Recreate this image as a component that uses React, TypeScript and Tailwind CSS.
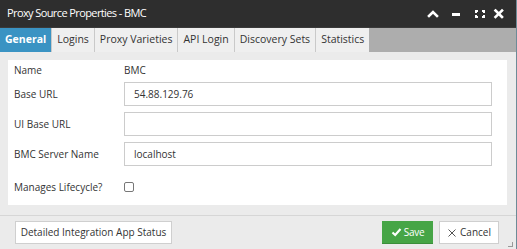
import React from "react";

const font = { fontFamily: '"Open Sans", "Liberation Sans", sans-serif' };

function Tab({ label, active }: { label: string; active?: boolean }) {
  return (
    <div
      className={
        active
          ? "h-full flex items-center px-[5px] bg-[#3a93c3] text-white font-bold text-[10.5px]"
          : "h-full flex items-center px-[5px] bg-[#efefef] text-[#333] text-[10.5px] border-l border-[#c9c9c9]"
      }
    >
      {label}
    </div>
  );
}

function Row({ label, value }: { label: string; value?: string }) {
  return (
    <div className="flex items-center h-[24px]">
      <div className="w-[110px] text-[10px] text-[#333]">{label}</div>
      <div className="flex-1 h-[24px] border border-[#cccccc] bg-white flex items-center px-[9px] text-[10px] text-[#333]">
        {value}
      </div>
    </div>
  );
}

export default function App() {
  return (
    <div className="w-[517px] h-[249px] bg-[#6d8b97] overflow-hidden" style={font}>
      <div className="w-[516px] h-[249px] flex flex-col bg-[#ebebeb]">
        {/* title bar */}
        <div className="h-[27px] bg-[#2e2e2e] flex items-center pl-[7px] pr-[10px] text-white">
          <div className="text-[11px] tracking-[-0.6px] flex-1">Proxy Source Properties - BMC</div>
          <div className="flex items-center">
            <svg width="24" height="14" viewBox="0 0 24 14">
              <path d="M7 9 L11 5 L15 9" stroke="white" strokeWidth="2.6" fill="none" strokeLinecap="square" />
            </svg>
            <svg width="22" height="14" viewBox="0 0 22 14">
              <rect x="6" y="6" width="8" height="3" fill="white" />
            </svg>
            <svg width="24" height="14" viewBox="0 0 24 14">
              <path d="M7 3h3v2H9v1H7zM17 3h-3v2h1v1h2zM7 11h3V9H9V8H7zM17 11h-3V9h1V8h2z" fill="white" />
            </svg>
            <svg width="14" height="14" viewBox="0 0 14 14">
              <path d="M3.5 3.5 L10 10 M10 3.5 L3.5 10" stroke="white" strokeWidth="2.6" strokeLinecap="square" />
            </svg>
          </div>
        </div>
        {/* tabs */}
        <div className="h-[25px] bg-[#adadad] flex border-t border-[#3a3a3a]">
          <Tab label="General" active />
          <Tab label="Logins" />
          <Tab label="Proxy Varieties" />
          <Tab label="API Login" />
          <Tab label="Discovery Sets" />
          <Tab label="Statistics" />
        </div>
        {/* body */}
        <div className="pt-[8px] pl-[8px] pr-[9px]">
          <div className="bg-white h-[145px] pl-[6px] pr-[15px] flex flex-col">
            <div className="flex items-center h-[18px] mt-[1px]">
              <div className="w-[110px] text-[10px] text-[#333]">Name</div>
              <div className="text-[10px] text-[#333]">BMC</div>
            </div>
            <div className="flex flex-col gap-[6px] mt-[3px]">
              <Row label="Base URL" value="54.88.129.76" />
              <Row label="UI Base URL" />
              <Row label="BMC Server Name" value="localhost" />
              <div className="flex items-center h-[30px]">
                <div className="w-[110px] text-[10px] text-[#333]">Manages Lifecycle?</div>
                <div className="w-[10px] h-[10px] border border-[#777] rounded-[2px] bg-white" />
              </div>
            </div>
          </div>
        </div>
        <div className="mt-[10px] border-t border-[#d6d6d6] flex-1 flex items-start pt-[5px] pl-[15px] pr-[17px] relative">
          <div className="h-[23px] w-[157px] bg-white border border-[#cfcfcf] flex items-center justify-center text-[10px] text-[#333]">
            Detailed Integration App Status
          </div>
          <div className="flex-1" />
          <div className="h-[23px] w-[51px] bg-[#46a546] border-b border-[#3b8f3b] flex items-center justify-center text-white text-[10px] tracking-[-0.3px]">
            <svg width="11" height="10" viewBox="0 0 11 10" className="mr-[2px]">
              <path d="M1.5 5.5 L4.2 8 L9.5 2" stroke="white" strokeWidth="2.2" fill="none" />
            </svg>
            Save
          </div>
          <div className="ml-[6px] h-[23px] w-[60px] bg-white border border-[#cfcfcf] flex items-center justify-center text-[#333] text-[10px]">
            <svg width="10" height="10" viewBox="0 0 10 10" className="mr-[3px]">
              <path d="M1.5 1.5 L8.5 8.5 M8.5 1.5 L1.5 8.5" stroke="#555" strokeWidth="1" />
            </svg>
            Cancel
          </div>
          <div className="absolute right-[3px] bottom-[2px] w-[6px] h-[6px]">
            <div className="absolute right-0 bottom-0 w-[1px] h-[5px] bg-[#999]" />
            <div className="absolute right-0 bottom-0 w-[5px] h-[1px] bg-[#999]" />
          </div>
        </div>
      </div>
    </div>
  );
}
